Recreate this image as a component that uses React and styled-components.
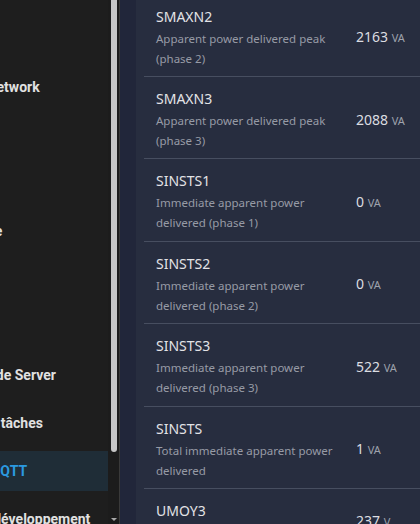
import React from 'react'
import styled, { createGlobalStyle } from 'styled-components'

const Global = createGlobalStyle`
  html, body { margin: 0; padding: 0; background: #21263a; }
  body { width: 420px; height: 524px; overflow: hidden; }
`

const Shell = styled.div`
  display: flex;
  width: 420px;
  height: 524px;
  overflow: hidden;
`

const Sidebar = styled.aside`
  display: flex;
  flex: 0 0 120px;
  background: #1e1e1e;
  border-right: 1px solid #3a3a3a;
  box-sizing: border-box;
`

const Nav = styled.nav`
  flex: 0 0 108px;
  overflow: hidden;
  display: flex;
  flex-direction: column;
  gap: 8px;
  padding-top: 19px;
  font-family: Roboto, "Liberation Sans", sans-serif;
  font-weight: 700;
  font-size: 14px;
`

const NavItem = styled.div`
  height: 40px;
  flex: 0 0 40px;
  display: flex;
  align-items: center;
  white-space: nowrap;
  color: ${p => (p.active ? '#2b9ae0' : '#e1e1e1')};
  background: ${p => (p.active ? '#1f2d37' : 'transparent')};
`

const Label = styled.span`
  margin-left: ${p => -p.hide}px;
`

const Track = styled.div`
  flex: 1;
  display: flex;
  flex-direction: column;
  align-items: center;
  padding-left: 1px;
  background: #1c1c1c;
`

const Thumb = styled.div`
  width: 6px;
  height: 452px;
  background: #c7c7c7;
  border-radius: 0 0 3px 3px;
`

const Arrow = styled.div`
  margin-top: auto;
  margin-bottom: 3px;
  width: 0;
  height: 0;
  border-left: 3px solid transparent;
  border-right: 3px solid transparent;
  border-top: 3px solid #a8a8a8;
`

const Main = styled.main`
  flex: 1;
  padding-left: 16px;
  background: #21263a;
  overflow: hidden;
`

const Card = styled.section`
  background: #272d3f;
  padding-left: 8px;
  margin-top: -5.4px;
  min-height: 600px;
`

const Row = styled.div`
  display: grid;
  grid-template-columns: 186px auto;
  column-gap: 14px;
  align-items: center;
  padding: 10px 0 7.4px 12px;
  border-bottom: 1px solid #474e60;
  font-family: "Noto Sans", "Open Sans", sans-serif;
`

const Info = styled.div`
  display: flex;
  flex-direction: column;
`

const Name = styled.div`
  font-size: 14px;
  line-height: 24px;
  color: #e3e3e6;
`

const Desc = styled.div`
  font-size: 11.5px;
  line-height: 20px;
  color: #979ba6;
`

const Value = styled.div`
  font-size: 14px;
  color: #dcdde1;
  white-space: nowrap;
`

const Unit = styled.span`
  font-size: 11px;
  color: #9ea2ad;
`

const nav = [
  { label: 'Map', hide: 60 },
  { label: 'Zigbee Network', hide: 60 },
  { label: 'Logbook', hide: 70 },
  { label: 'History', hide: 70 },
  { label: 'Carte', hide: 32 },
  { label: 'Media', hide: 60 },
  { label: 'Energy', hide: 60 },
  { label: 'Node Server', hide: 22 },
  { label: 'Planificateur de tâches', hide: 102 },
  { label: 'MQTT', hide: 12, active: true },
  { label: 'Outils de développement', hide: 66 },
]

const rows = [
  { name: 'SMAXN2', desc: 'Apparent power delivered peak (phase 2)', value: 2163, unit: 'VA' },
  { name: 'SMAXN3', desc: 'Apparent power delivered peak (phase 3)', value: 2088, unit: 'VA' },
  { name: 'SINSTS1', desc: 'Immediate apparent power delivered (phase 1)', value: 0, unit: 'VA' },
  { name: 'SINSTS2', desc: 'Immediate apparent power delivered (phase 2)', value: 0, unit: 'VA' },
  { name: 'SINSTS3', desc: 'Immediate apparent power delivered (phase 3)', value: 522, unit: 'VA' },
  { name: 'SINSTS', desc: 'Total immediate apparent power delivered', value: 1, unit: 'VA' },
  { name: 'UMOY3', desc: 'Mean voltage (phase 3)', value: 237, unit: 'V' },
]

export default function App() {
  return (
    <>
      <Global />
      <Shell>
        <Sidebar>
          <Nav>
            {nav.map(n => (
              <NavItem key={n.label} active={n.active}>
                <Label hide={n.hide}>{n.label}</Label>
              </NavItem>
            ))}
          </Nav>
          <Track>
            <Thumb />
            <Arrow />
          </Track>
        </Sidebar>
        <Main>
          <Card>
            {rows.map(r => (
              <Row key={r.name}>
                <Info>
                  <Name>{r.name}</Name>
                  <Desc>{r.desc}</Desc>
                </Info>
                <Value>
                  {r.value} <Unit>{r.unit}</Unit>
                </Value>
              </Row>
            ))}
          </Card>
        </Main>
      </Shell>
    </>
  )
}
